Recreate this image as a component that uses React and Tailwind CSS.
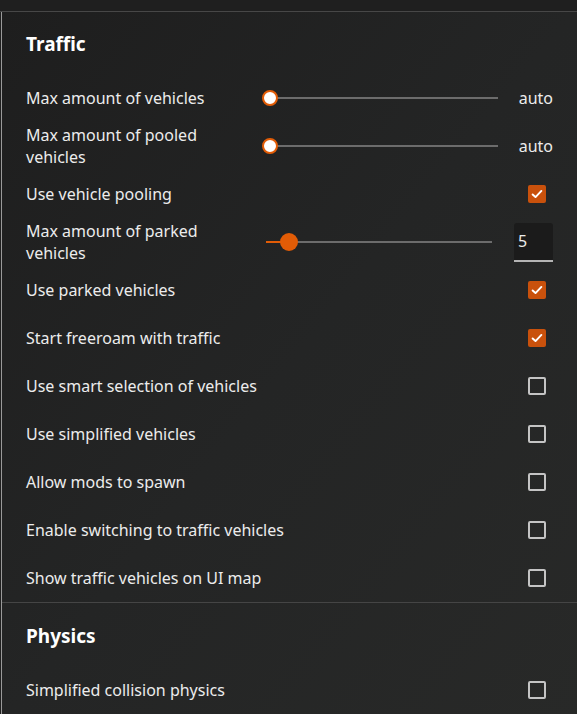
import { useState } from "react";

const trafficRows = [
  { type: "slider", label: "Max amount of vehicles", value: "auto" },
  { type: "slider", label: "Max amount of pooled vehicles", value: "auto" },
  { type: "check", label: "Use vehicle pooling", checked: true },
  { type: "number", label: "Max amount of parked vehicles", value: "5" },
  { type: "check", label: "Use parked vehicles", checked: true },
  { type: "check", label: "Start freeroam with traffic", checked: true },
  { type: "check", label: "Use smart selection of vehicles", checked: false },
  { type: "check", label: "Use simplified vehicles", checked: false },
  { type: "check", label: "Allow mods to spawn", checked: false },
  { type: "check", label: "Enable switching to traffic vehicles", checked: false },
  { type: "check", label: "Show traffic vehicles on UI map", checked: false }
];

const physicsRows = [{ type: "check", label: "Simplified collision physics", checked: false }];

function Checkbox({ checked }) {
  if (checked) {
    return (
      <span className="grid h-[18px] w-[18px] place-items-center rounded-[2px] bg-[#c9510c]">
        <svg viewBox="0 0 16 16" className="h-[14px] w-[14px]" fill="none" stroke="#ffffff" strokeWidth="2.2" strokeLinecap="round" strokeLinejoin="round">
          <path d="M3 8.5 6.3 11.5 13 4.5" />
        </svg>
      </span>
    );
  }
  return <span className="block h-[18px] w-[18px] rounded-[2px] border-2 border-[#c4c4c4]" />;
}

function AutoSlider({ value }) {
  return (
    <div className="flex flex-1 items-center">
      <div className="relative flex h-5 w-[236px] items-center">
        <div className="ml-[7px] h-[2px] flex-1 bg-[#6c6c6c]" />
        <span className="absolute left-0 h-4 w-4 rounded-full border-2 border-[#e25c06] bg-white" />
      </div>
      <span className="ml-auto pl-[1px] text-[16px] text-[#ececec]">{value}</span>
    </div>
  );
}

function NumberSlider({ value }) {
  return (
    <div className="flex flex-1 items-center">
      <div className="relative ml-[4px] flex h-5 w-[226px] items-center">
        <div className="h-[2px] w-[23px] bg-[#e25c06]" />
        <div className="h-[2px] flex-1 bg-[#6c6c6c]" />
        <span className="absolute left-[14px] h-[18px] w-[18px] rounded-full bg-[#e25c06]" />
      </div>
      <div className="ml-auto flex h-[39px] w-[39px] items-center rounded-t-[3px] border-b-2 border-[#b4b4b4] bg-[#1b1b1b] pl-[4px] text-[16px] text-[#ececec]">
        {value}
      </div>
    </div>
  );
}

function Row({ row }) {
  const [checked, setChecked] = useState(row.checked);
  const isCheck = row.type === "check";
  return (
    <div className="flex h-12 items-center">
      <p className={`${isCheck ? "flex-1" : "w-[236px] shrink-0 pr-[40px]"} text-[16px] leading-[22px] text-[#ececec]`}>{row.label}</p>
      {row.type === "slider" ? <AutoSlider value={row.value} /> : null}
      {row.type === "number" ? <NumberSlider value={row.value} /> : null}
      {isCheck ? (
        <button type="button" onClick={() => setChecked(!checked)} className="ml-auto mr-[7px]">
          <Checkbox checked={checked} />
        </button>
      ) : null}
    </div>
  );
}

function Section({ title, rows, last }) {
  return (
    <section className={last ? "" : "border-b border-[#454545]"}>
      <h2
        className={`flex ${last ? "h-[63px] pt-[3px]" : "h-[62px] pt-[2px]"} items-center pl-[24px] text-[19px] font-bold text-white`}
      >
        {title}
      </h2>
      <div className="pl-[24px] pr-[24px]">
        {rows.map((row) => (
          <Row key={row.label} row={row} />
        ))}
      </div>
    </section>
  );
}

export default function App() {
  return (
    <div
      className="h-[714px] w-[577px] overflow-hidden bg-[#1f1f1f] text-[#ececec]"
      style={{ fontFamily: '"Noto Sans", "Open Sans", sans-serif' }}
    >
      <div className="h-[11px]" />
      <div className="h-full border-t border-[#474747] pl-px">
        <div className="h-full border-l border-[#9a9a9a] bg-gradient-to-br from-[#1e1e1e] via-[#242525] to-[#282928]">
          <Section title="Traffic" rows={trafficRows} />
          <Section title="Physics" rows={physicsRows} last />
        </div>
      </div>
    </div>
  );
}
